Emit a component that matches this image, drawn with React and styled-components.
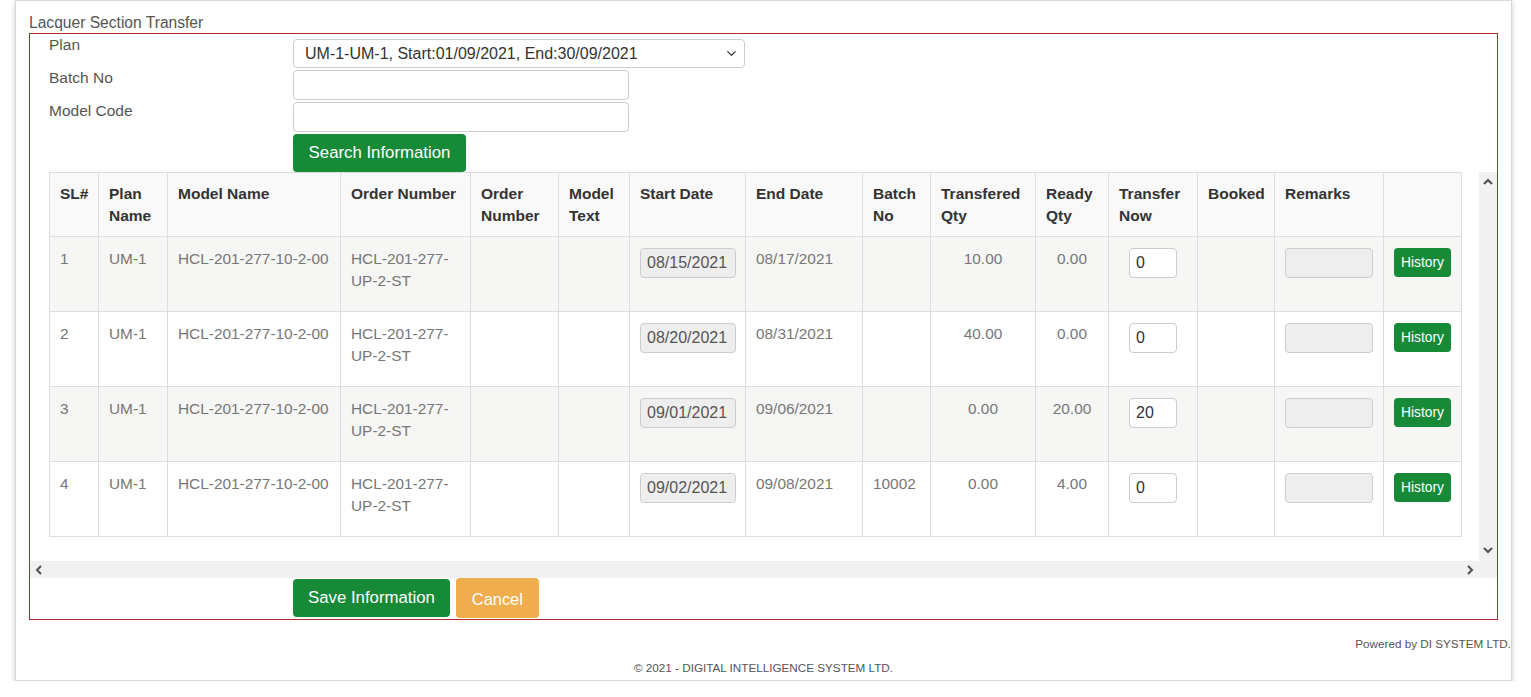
import React from 'react'
import styled, { createGlobalStyle } from 'styled-components'
import { ChevronDown } from 'lucide-react'

const GlobalStyle = createGlobalStyle`
  body {
    margin: 0;
    background: #fff;
    font-family: "Liberation Sans", Arial, sans-serif;
  }
  * { box-sizing: border-box; }
`

const green = '#178a38'

const Card = styled.div`
  margin-left: 15px;
  width: 1497px;
  border: 1px solid #d8d8d8;
  box-shadow: 0 2px 5px rgba(0, 0, 0, 0.22);
  padding: 11px 0 4px;
`

const Title = styled.div`
  margin: 0 13px;
  font-size: 15.6px;
  line-height: 21px;
  color: #555;
`

const Panel = styled.div`
  margin: 0 13px;
  border: 1px solid #b52b2b;
`

const Form = styled.div`
  display: grid;
  grid-template-columns: 244px 1fr;
  row-gap: 2px;
  padding: 5px 0 0 19px;
`

const Label = styled.div`
  margin-top: ${p => p.$mt}px;
  font-size: 15.5px;
  line-height: 22px;
  color: #555;
`

const SelectWrap = styled.div`
  position: relative;
  width: 452px;
  height: 29px;
  svg {
    position: absolute;
    right: 6px;
    top: 7px;
    pointer-events: none;
  }
`

const Select = styled.select`
  appearance: none;
  width: 100%;
  height: 100%;
  border: 1px solid #ccc;
  border-radius: 4px;
  background: #fff;
  padding: 0 11px;
  font-family: inherit;
  font-size: 16px;
  color: #333;
`

const TextInput = styled.input`
  width: ${p => p.$w || 336}px;
  height: 30px;
  border: 1px solid #ccc;
  border-radius: 4px;
  background: ${p => (p.$disabled ? '#eee' : '#fff')};
  padding: 0 6px;
  font-family: inherit;
  font-size: 16px;
  color: ${p => (p.$disabled ? '#555' : '#333')};
`

const Button = styled.button`
  height: ${p => p.$h || 38}px;
  padding: 0 ${p => p.$px || 15}px;
  border: none;
  border-radius: 4px;
  background: ${p => p.$bg || green};
  color: #fff;
  font-family: inherit;
  font-size: ${p => p.$fs || 16.8}px;
  margin-top: ${p => p.$mt || 0}px;
  cursor: pointer;
`

const SearchButton = styled(Button)`
  grid-column: 2;
  width: 173px;
`

const ScrollBox = styled.div`
  display: grid;
  grid-template-columns: 1fr 18px;
  grid-template-rows: 389px 17px;
`

const ScrollContent = styled.div`
  padding-left: 19px;
  overflow: hidden;
`

const VBar = styled.div`
  background: #f1f1f1;
  display: flex;
  flex-direction: column;
  justify-content: space-between;
  align-items: center;
  padding: 6px 0 7px;
`

const HBar = styled.div`
  grid-column: 1 / 3;
  background: #f1f1f1;
  display: flex;
  justify-content: space-between;
  align-items: center;
  padding: 0 23px 0 5px;
`

const Table = styled.table`
  border-collapse: collapse;
  table-layout: fixed;
  width: 1413px;
`

const Th = styled.th`
  padding: 10px 10px 9px;
  text-align: left;
  vertical-align: top;
  font-size: 15.5px;
  line-height: 22px;
  font-weight: bold;
  color: #333;
  border: 1px solid #ddd;
  background: #f9f9f9;
`

const HeadRow = styled.tr`
  height: 63px;
`

const Row = styled.tr`
  height: 75px;
  background: ${p => (p.$striped ? '#f6f6f4' : '#fff')};
`

const Td = styled.td`
  padding: 11px 10px 9px;
  vertical-align: top;
  text-align: ${p => (p.$center ? 'center' : 'left')};
  font-size: 15.4px;
  line-height: 22px;
  color: #777;
  border: 1px solid #ddd;
  white-space: ${p => (p.$nowrap ? 'nowrap' : 'normal')};
`

const Actions = styled.div`
  display: flex;
  align-items: flex-start;
  gap: 6px;
  padding-left: 263px;
  height: 41px;
`

const Powered = styled.div`
  margin-top: 15px;
  text-align: right;
  font-size: 11.7px;
  line-height: 17px;
  color: #555;
`

const Copy = styled.div`
  margin-top: 7px;
  text-align: center;
  font-size: 11.7px;
  line-height: 17px;
  color: #555;
`

const Arrow = ({ dir }) => {
  const pts = {
    up: '1,6 5,2 9,6',
    down: '1,2 5,6 9,2',
    left: '6,1 2,5 6,9',
    right: '2,1 6,5 2,9',
  }[dir]
  const horiz = dir === 'left' || dir === 'right'
  return (
    <svg width={horiz ? 8 : 10} height={horiz ? 10 : 8} viewBox={horiz ? '0 0 8 10' : '0 0 10 8'}>
      <polyline points={pts} fill="none" stroke="#505050" strokeWidth="2" />
    </svg>
  )
}

const cols = [49, 69, 173, 130, 88, 71, 116, 117, 68, 105, 73, 89, 77, 109, 78]
const heads = [
  'SL#', 'Plan Name', 'Model Name', 'Order Number', 'Order Number', 'Model Text',
  'Start Date', 'End Date', 'Batch No', 'Transfered Qty', 'Ready Qty', 'Transfer Now',
  'Booked', 'Remarks', '',
]

const rows = [
  { start: '08/15/2021', end: '08/17/2021', batch: '', trans: '10.00', ready: '0.00', now: '0' },
  { start: '08/20/2021', end: '08/31/2021', batch: '', trans: '40.00', ready: '0.00', now: '0' },
  { start: '09/01/2021', end: '09/06/2021', batch: '', trans: '0.00', ready: '20.00', now: '20' },
  { start: '09/02/2021', end: '09/08/2021', batch: '10002', trans: '0.00', ready: '4.00', now: '0' },
]

export default function App() {
  return (
    <>
      <GlobalStyle />
      <Card>
        <Title>Lacquer Section Transfer</Title>
        <Panel>
          <Form>
            <Label $mt={-5}>Plan</Label>
            <SelectWrap>
              <Select defaultValue="um1">
                <option value="um1">UM-1-UM-1, Start:01/09/2021, End:30/09/2021</option>
              </Select>
              <ChevronDown size={15} strokeWidth={2} color="#333" />
            </SelectWrap>
            <Label $mt={-3}>Batch No</Label>
            <TextInput />
            <Label $mt={-2}>Model Code</Label>
            <TextInput />
            <SearchButton>Search Information</SearchButton>
          </Form>

          <ScrollBox>
            <ScrollContent>
              <Table>
                <colgroup>
                  {cols.map((w, i) => <col key={i} style={{ width: w }} />)}
                </colgroup>
                <thead>
                  <HeadRow>
                    {heads.map((h, i) => <Th key={i}>{h}</Th>)}
                  </HeadRow>
                </thead>
                <tbody>
                  {rows.map((r, i) => (
                    <Row key={i} $striped={i % 2 === 0}>
                      <Td>{i + 1}</Td>
                      <Td>UM-1</Td>
                      <Td $nowrap>HCL-201-277-10-2-00</Td>
                      <Td>HCL-201-277-UP-2-ST</Td>
                      <Td />
                      <Td />
                      <Td><TextInput $w={96} $disabled value={r.start} readOnly /></Td>
                      <Td>{r.end}</Td>
                      <Td>{r.batch}</Td>
                      <Td $center>{r.trans}</Td>
                      <Td $center>{r.ready}</Td>
                      <Td $center><TextInput $w={48} defaultValue={r.now} /></Td>
                      <Td />
                      <Td><TextInput $w={88} $disabled readOnly /></Td>
                      <Td><Button $h={29} $fs={13.8} $px={7}>History</Button></Td>
                    </Row>
                  ))}
                </tbody>
              </Table>
            </ScrollContent>
            <VBar>
              <Arrow dir="up" />
              <Arrow dir="down" />
            </VBar>
            <HBar>
              <Arrow dir="left" />
              <Arrow dir="right" />
            </HBar>
          </ScrollBox>

          <Actions>
            <Button $mt={1}>Save Information</Button>
            <Button $h={40} $bg="#f0ad4e" $fs={16.4} $px={16} style={{ paddingTop: 3 }}>Cancel</Button>
          </Actions>
        </Panel>
        <Powered>Powered by DI SYSTEM LTD.</Powered>
        <Copy>© 2021 - DIGITAL INTELLIGENCE SYSTEM LTD.</Copy>
      </Card>
    </>
  )
}
